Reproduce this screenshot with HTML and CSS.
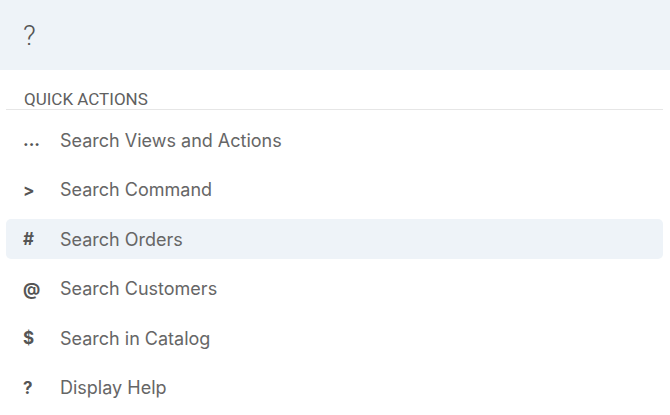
FILE: index.html
```html
<!DOCTYPE html>
<html>
<head>
<meta charset="utf-8">
<link rel="stylesheet" href="styles.css">
</head>
<body>
<div class="palette">
  <div class="search"><span class="query">?</span></div>
  <div class="section">
    <div class="label">Quick Actions</div>
    <ul class="list">
      <li class="item"><span class="key">...</span><span class="text">Search Views and Actions</span></li>
      <li class="item"><span class="key">&gt;</span><span class="text">Search Command</span></li>
      <li class="item active"><span class="key">#</span><span class="text">Search Orders</span></li>
      <li class="item"><span class="key">@</span><span class="text">Search Customers</span></li>
      <li class="item"><span class="key">$</span><span class="text">Search in Catalog</span></li>
      <li class="item"><span class="key">?</span><span class="text">Display Help</span></li>
    </ul>
  </div>
</div>
</body>
</html>
```
FILE: styles.css
```css
html, body {
  margin: 0;
  padding: 0;
  background: #ffffff;
}
.palette {
  width: 670px;
  font-family: Inter, "Noto Sans", sans-serif;
  color: #666;
}
.search {
  height: 70px;
  background: #eef3f8;
  display: flex;
  align-items: center;
  padding-left: 23px;
}
.query {
  font-family: Roboto, sans-serif;
  font-weight: 300;
  font-size: 28px;
  color: #555;
}
.section {
  padding: 0 7px 0 6px;
}
.label {
  font-family: Roboto, sans-serif;
  font-size: 17px;
  color: #606060;
  text-transform: uppercase;
  padding: 21px 0 2px 18px;
  border-bottom: 1px solid #e6e6e6;
  line-height: 16px;
}
.list {
  list-style: none;
  margin: 10px 0 0 0;
  padding: 0;
  display: flex;
  flex-direction: column;
  gap: 9.6px;
}
.item {
  height: 40px;
  display: flex;
  align-items: center;
  border-radius: 5px;
  font-size: 18px;
}
.item.active {
  background: #eef3f8;
}
.key {
  width: 54px;
  padding-left: 17px;
  box-sizing: border-box;
  font-weight: 700;
  font-size: 17px;
  color: #555;
}
.text {
  color: #666;
}
```
